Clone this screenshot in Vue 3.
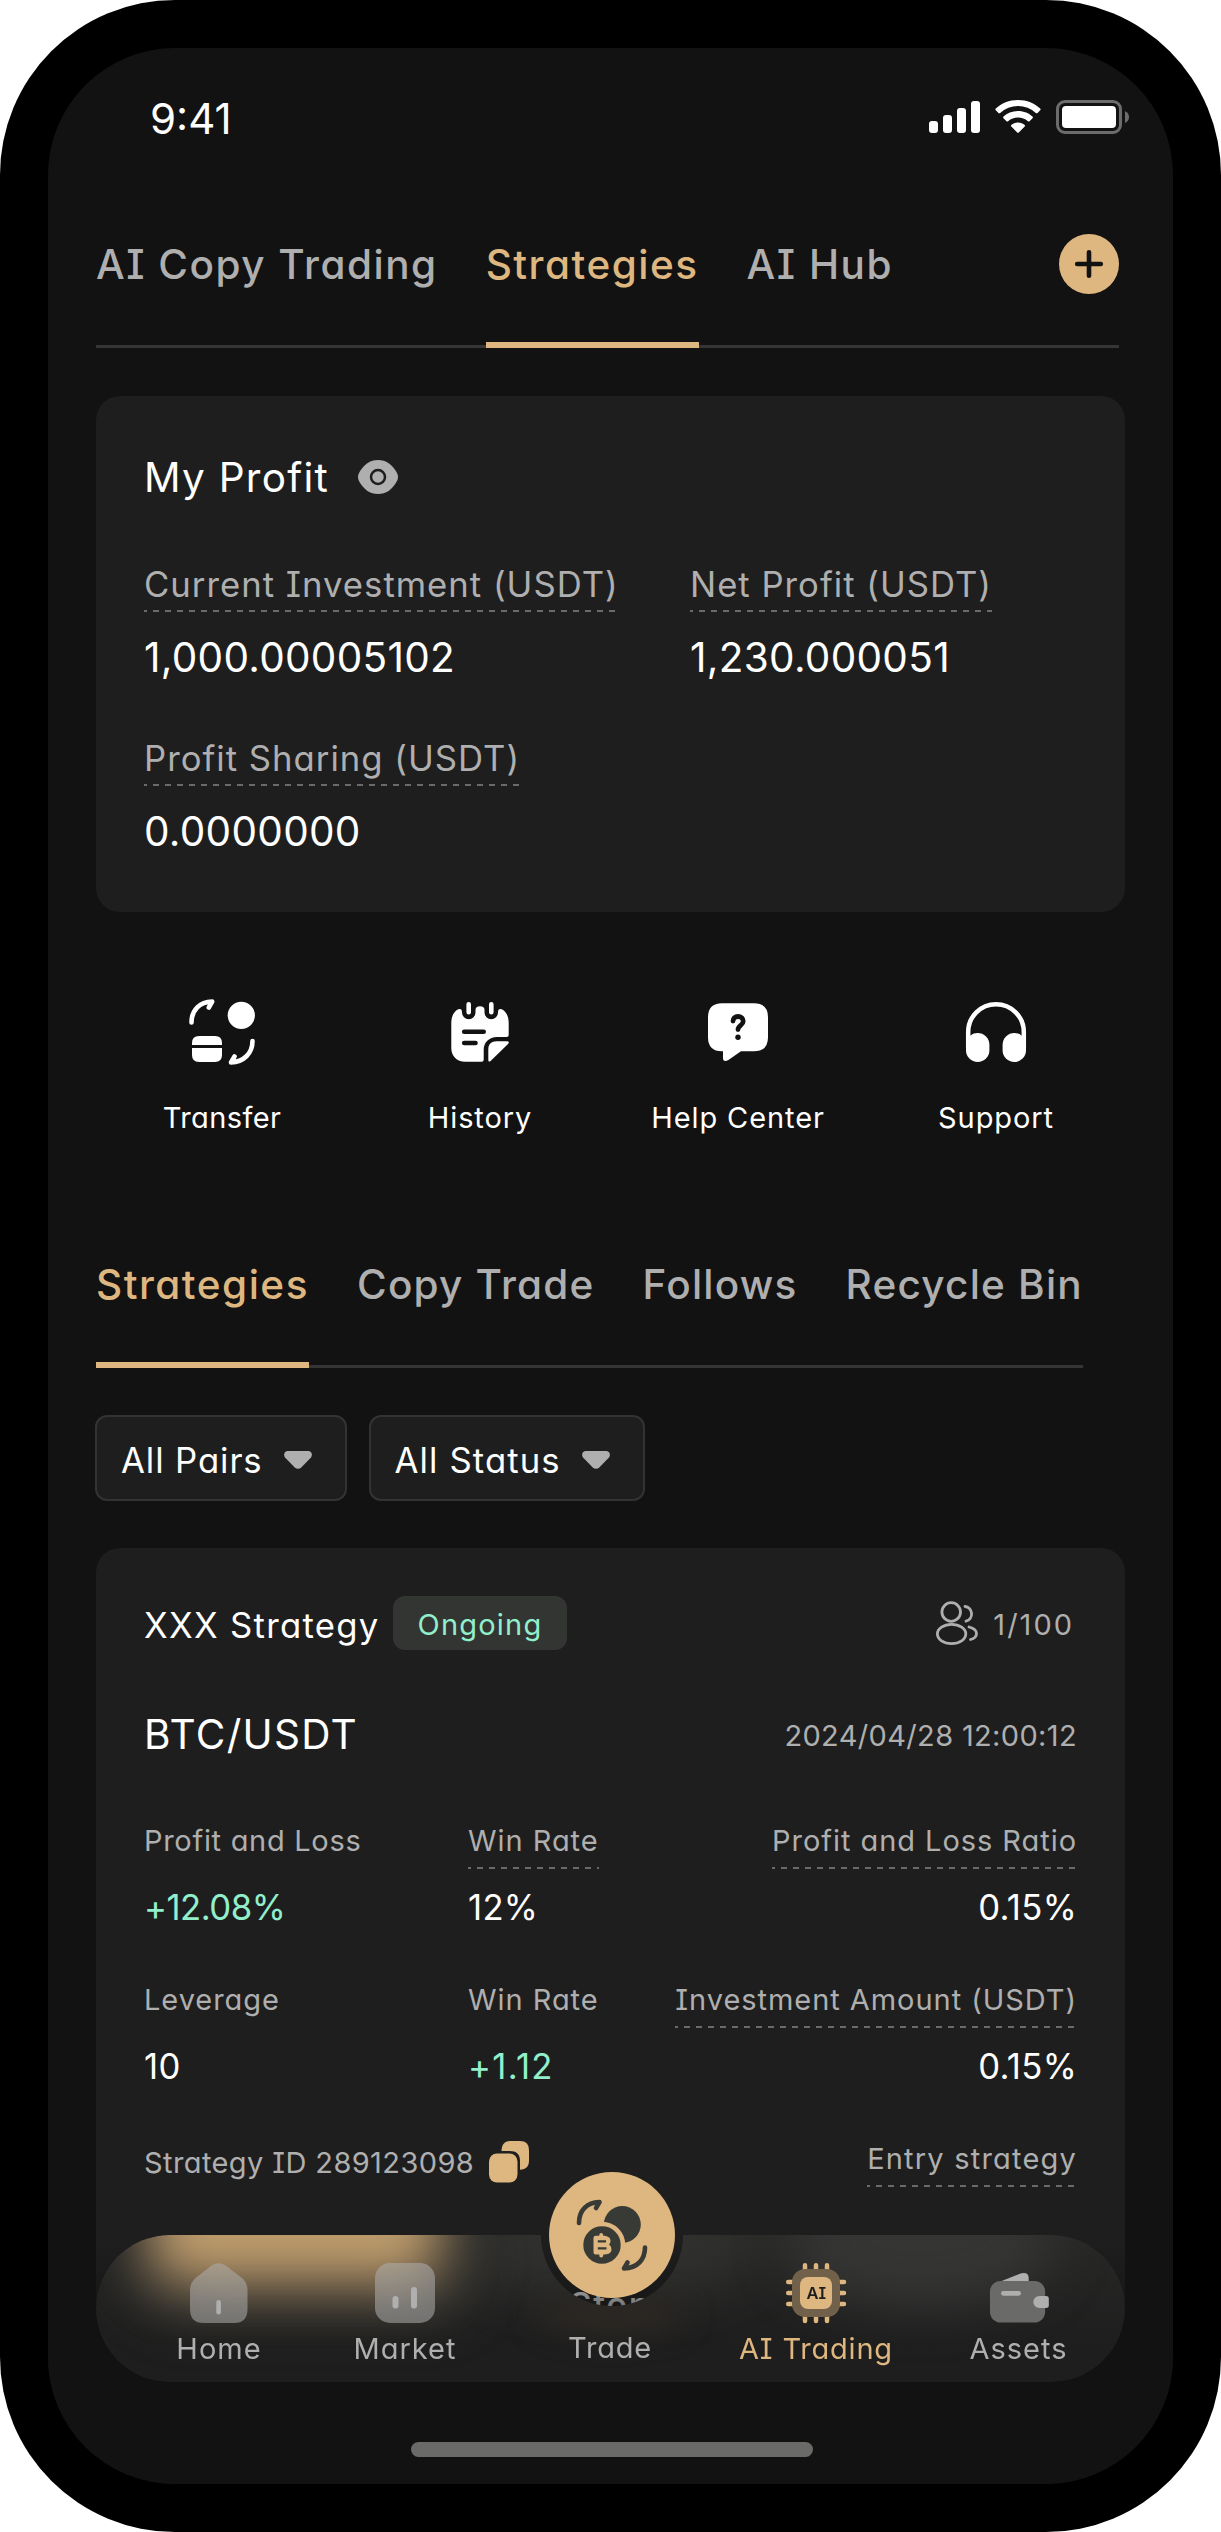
<script setup>
const mainTabs = [
  { label: 'AI Copy Trading' },
  { label: 'Strategies', active: true },
  { label: 'AI Hub' }
]
const listTabs = [
  { label: 'Strategies', active: true },
  { label: 'Copy Trade' },
  { label: 'Follows' },
  { label: 'Recycle Bin' }
]
const totals = [
  { label: 'Current Investment (USDT)', value: '1,000.00005102' },
  { label: 'Net Profit (USDT)', value: '1,230.000051' },
  { label: 'Profit Sharing (USDT)', value: '0.0000000' }
]
const filters = ['All Pairs', 'All Status']
const stats = [
  { label: 'Profit and Loss', value: '+12.08%', gain: true, kind: 'snug' },
  { label: 'Win Rate', value: '12%', dashed: true },
  { label: 'Profit and Loss Ratio', value: '0.15%', dashed: true },
  { label: 'Leverage', value: '10' },
  { label: 'Win Rate', value: '+1.12', gain: true, kind: 'loose' },
  { label: 'Investment Amount (USDT)', value: '0.15%', dashed: true }
]
</script>

<template>
  <div class="device">
    <div class="screen">
      <header class="status">
        <span class="time">9:41</span>
        <svg class="status-icons" width="202" height="36" viewBox="0 0 202 36">
          <g fill="#fff">
            <rect x="1" y="22" width="9" height="12" rx="3" />
            <rect x="15" y="16" width="9" height="18" rx="3" />
            <rect x="29" y="9" width="9" height="25" rx="3" />
            <rect x="43" y="2" width="9" height="32" rx="3" />
            <path d="M90 1C81 1 73.500 4.300 67.800 9.600Q67 10.400 67.800 11.200L70.500 14Q71.300 14.700 72.200 14A26 26 0 0 1 107.800 14Q108.700 14.700 109.500 14L112.200 11.200Q113 10.400 112.200 9.600C106.500 4.300 99 1 90 1Z" />
            <path d="M90 12C84 12 79 14.200 75.500 17.600Q74.700 18.400 75.500 19.200L78.500 22.200Q79.300 22.900 80.100 22.200A15 15 0 0 1 99.900 22.200Q100.700 22.900 101.500 22.200L104.500 19.200Q105.300 18.400 104.500 17.600C101 14.200 96 12 90 12Z" />
            <path d="M90 23.500C87.200 23.500 85 24.500 83.300 26Q82.500 26.800 83.300 27.600L89.200 33.500Q90 34.200 90.800 33.500L96.700 27.600Q97.500 26.800 96.700 26C95 24.500 92.800 23.500 90 23.500Z" />
            <rect x="134" y="7" width="54" height="22" rx="4" />
          </g>
          <rect x="129.500" y="2.500" width="63" height="31" rx="7.500" fill="none" stroke="#6c6c6c" stroke-width="3" />
          <path d="M197 12Q201 14 201 18T197 24Z" fill="#6c6c6c" />
        </svg>
      </header>

      <nav class="tabs main-tabs">
        <span v-for="t in mainTabs" :key="t.label" class="tab" :class="{ active: t.active }">{{ t.label }}</span>
        <svg class="plus" width="60" height="60" viewBox="0 0 60 60">
          <circle cx="30" cy="30" r="30" fill="#deb67f" />
          <path d="M18.200 30H41.800M30 18.200V41.800" stroke="#121212" stroke-width="4.600" stroke-linecap="round" />
        </svg>
      </nav>

      <section class="card profit">
        <h2 class="profit-title">
          My Profit
          <svg width="40" height="34" viewBox="0 0 40 34">
            <path d="M1 13C6 4 12 0 20 0S34 4 39 13Q41 17 39 21C34 30 28 34 20 34S6 30 1 21Q-1 17 1 13Z" fill="#afafaf" />
            <circle cx="20" cy="17" r="7" fill="none" stroke="#1e1e1e" stroke-width="2.500" />
          </svg>
        </h2>
        <div class="profit-grid">
          <div v-for="t in totals" :key="t.label">
            <span class="label dashed">{{ t.label }}</span>
            <p class="total">{{ t.value }}</p>
          </div>
        </div>
      </section>

      <section class="actions">
        <div class="action">
          <svg width="66" height="66" viewBox="0 0 66 66" fill="#fff">
            <path d="M2.500 23.500C2.500 10.500 11 3 23.200 2.500L19.800 8.500M63.500 42C63.500 54.500 54.500 63 42 63.500L45.500 57.500" fill="none" stroke="#fff" stroke-width="4.600" stroke-linecap="round" stroke-linejoin="round" />
            <circle cx="52.300" cy="16.300" r="13.600" />
            <path d="M3 46V44Q3 37 10 37H26Q33 37 33 44V46ZM3 49H33V56Q33 63 26 63H10Q3 63 3 56Z" />
          </svg>
          <span class="near">Transfer</span>
        </div>
        <div class="action">
          <svg width="66" height="66" viewBox="0 0 66 66" fill="#fff">
            <path d="M4.300 24C4.300 16.500 7.500 12 11.200 10.300Q15 9 15 13.500A6.700 6.700 0 0 0 28.500 13.500V11Q28.500 7.300 33 7.300T37.500 11V13.500A6.700 6.700 0 0 0 51 13.500Q51 9 54.800 10.300C58.500 12 61.700 16.500 61.700 24V36Q61.700 38 59.700 38H50C42 38 36.700 43.500 36.700 51V60.700Q36.700 62.700 34.700 62.700H18.300C9.500 62.700 4.300 57 4.300 49Z" />
            <path d="M21.700 5.200V13.200M44.300 5.200V13.200" stroke="#fff" stroke-width="4.600" stroke-linecap="round" />
            <path d="M17.200 32.700H36.700M17.200 44H28.500" stroke="#121212" stroke-width="4.600" stroke-linecap="round" />
            <path d="M41.300 50C41.300 45 44.500 42.200 49.500 42.200H60Q63 42.500 61 45L43.600 62Q41.300 63.600 41.300 61Z" />
          </svg>
          <span>History</span>
        </div>
        <div class="action">
          <svg width="66" height="66" viewBox="0 0 66 66" fill="#fff">
            <path d="M17 4.300H49Q63 4.300 63 18.300V38.300Q63 52.300 49 52.300H36L23 61.300Q18 63.500 18 59V52.300H17Q3 52.300 3 38.300V18.300Q3 4.300 17 4.300Z" />
            <path d="M28 22C28 19.500 30 17.500 33 17.500S38.200 19.500 38.200 22.300C38.200 26.300 33 26.300 33 30.500" fill="none" stroke="#121212" stroke-width="4.800" stroke-linecap="round" />
            <circle cx="33" cy="38.200" r="2.700" fill="#121212" />
          </svg>
          <span>Help Center</span>
        </div>
        <div class="action">
          <svg width="66" height="66" viewBox="0 0 66 66" fill="#fff">
            <path d="M5.200 48V33A27.800 27.800 0 0 1 60.800 33V48" fill="none" stroke="#fff" stroke-width="4.500" />
            <rect x="3" y="34" width="23.400" height="29" rx="11.700" />
            <rect x="39.600" y="34" width="23.400" height="29" rx="11.700" />
          </svg>
          <span>Support</span>
        </div>
      </section>

      <nav class="tabs list-tabs">
        <span v-for="t in listTabs" :key="t.label" class="tab" :class="{ active: t.active }">{{ t.label }}</span>
      </nav>

      <div class="filters">
        <button v-for="f in filters" :key="f" class="filter">
          {{ f }}
          <svg width="28" height="18" viewBox="0 0 28 18"><path d="M3 0H25Q29.500 1.500 27 6.500L17.500 16.200Q14 19.500 10.500 16.200L1 6.500Q-1.500 1.500 3 0Z" fill="#afafaf" /></svg>
        </button>
      </div>

      <section class="card strategy">
        <div class="head">
          <h3>XXX Strategy</h3>
          <span class="badge">Ongoing</span>
          <span class="members">
            <svg width="42" height="44" viewBox="0 0 42 44" fill="none" stroke="#afafaf" stroke-width="2.800" stroke-linecap="round">
              <circle cx="15.200" cy="11" r="9.300" />
              <ellipse cx="15.600" cy="33" rx="14.200" ry="9.600" />
              <path d="M29 5.500A7.500 7.500 0 0 1 30 20.200M33 26C38 27.300 40.500 29.500 40.500 32.500C40.500 35.500 38 37.700 34.500 38.500" />
            </svg>
            <span>1/100</span>
          </span>
        </div>
        <div class="pair">
          <span class="pair-name">BTC/USDT</span>
          <span class="date">2024/04/28 12:00:12</span>
        </div>
        <div class="stats">
          <div v-for="(s, i) in stats" :key="i" class="stat">
            <span class="small" :class="{ dashed: s.dashed }">{{ s.label }}</span>
            <p :class="[s.kind, { gain: s.gain }]">{{ s.value }}</p>
          </div>
        </div>
        <div class="foot">
          <span class="id">Strategy ID 289123098</span>
          <svg width="40" height="42" viewBox="0 0 40 42" fill="#deb67f">
            <path d="M12.500 10C12.800 3.500 15.500 0 21.500 0H31Q40 0 40 9V19.500C40 25.500 37 28.500 31 28.800V20C31 13 27.500 10 20.500 10Z" />
            <rect x="0" y="12.500" width="28.500" height="29" rx="8" />
          </svg>
          <span class="small dashed entry">Entry strategy</span>
        </div>
        <div class="stop">Stop</div>
      </section>

      <div class="fade"></div>

      <nav class="dock">
        <div class="dock-panel">
          <i class="glow mid"></i>
          <i class="glow cool"></i>
          <i class="glow ember"></i>
          <i class="glow halo"></i>
          <i class="glow warm"></i>
          <div class="dock-items">
            <div class="item">
              <svg width="60" height="60" viewBox="0 0 60 60" fill="#afafaf">
                <path d="M22.500 2.500Q29.500-2 36.500 2.500L53 15Q58.500 20 58.500 27V46Q58.500 60 45 60H14.500Q1 60 1 46V27Q1 20 6.500 15Z" opacity=".55" />
                <rect x="27.300" y="37" width="4.600" height="14.500" rx="2.300" />
              </svg>
              <span>Home</span>
            </div>
            <div class="item">
              <svg width="60" height="60" viewBox="0 0 60 60" fill="#afafaf">
                <rect width="60" height="60" rx="15" opacity=".55" />
                <rect x="17.500" y="33" width="6" height="12.500" rx="3" />
                <rect x="36" y="24" width="6" height="21.500" rx="3" />
              </svg>
              <span>Market</span>
            </div>
            <div class="item trade-item"><span>Trade</span></div>
            <div class="item current">
              <svg width="60" height="60" viewBox="0 0 60 60">
                <path d="M19 2.200V58M30 2.200V58M41 2.200V58M2.200 19H58M2.200 30H58M2.200 41H58" stroke="#deb67f" stroke-width="4.500" stroke-linecap="round" />
                <rect x="6" y="6" width="48" height="48" rx="13" fill="#71614a" />
                <rect x="14" y="14" width="32" height="32" rx="8" fill="#deb67f" />
                <text x="30.300" y="36" text-anchor="middle" font-size="16.500" font-weight="600" fill="#1e1e1e">AI</text>
              </svg>
              <span>AI Trading</span>
            </div>
            <div class="item">
              <svg width="62" height="62" viewBox="0 0 62 62" fill="#afafaf">
                <path d="M13 18.500L33.500 10.500Q41 9 41 15.500V18.500Z" />
                <rect x="1" y="18.500" width="57" height="43" rx="11" fill="#6a6a69" />
                <rect x="12.500" y="29" width="20.500" height="4.800" rx="2.200" />
                <path d="M52 34H59Q61.800 34 61.800 36.800V43.700Q61.800 46.500 59 46.500H52A6.200 6.200 0 0 1 52 34Z" />
              </svg>
              <span>Assets</span>
            </div>
          </div>
        </div>
        <svg class="trade" width="126" height="126" viewBox="0 0 126 126">
          <circle cx="63" cy="63" r="63" fill="#deb67f" />
          <path d="M30 51C30 38 38 30.500 50.500 30L47 36M96 75.500C96 88 88 96 75 96.500L78.500 90.500" fill="none" stroke="#383a36" stroke-width="4.600" stroke-linecap="round" stroke-linejoin="round" />
          <circle cx="73.300" cy="52.500" r="18.500" fill="#383a36" />
          <circle cx="53" cy="73" r="21" fill="#383a36" stroke="#deb67f" stroke-width="4.600" />
          <path d="M44.500 66Q44.500 63.800 46.700 63.800H50.300V63Q50.300 61 52.200 61T54.200 63V63.800C59.500 63.800 61.500 66.200 61.500 69Q61.500 71.300 60 72.600Q62.500 74.200 62.500 77.300C62.500 80.500 60 82.500 55.500 82.500H54.200V83.500Q54.200 85.500 52.200 85.500T50.300 83.500V82.500H46.700Q44.500 82.500 44.500 80.300Z" fill="#deb67f" />
          <path d="M48.800 69.300H57M48.800 76.300H57.500" stroke="#383a36" stroke-width="2.300" />
        </svg>
      </nav>
      <div class="home-bar"></div>
    </div>
  </div>
</template>

<style>
body { margin: 0; background: #fff; }
</style>

<style scoped>
.device {
  box-sizing: border-box;
  width: 1221px;
  height: 2532px;
  padding: 48px;
  border-radius: 175px;
  background: #000;
  color: #fff;
  font-family: Inter, "Noto Sans", sans-serif;
  font-feature-settings: "cv08", "cv11";
}
.screen {
  position: relative;
  box-sizing: border-box;
  height: 2436px;
  padding: 0 48px;
  border-radius: 127px;
  background: #121212;
  overflow: hidden;
}
h2, h3, p { margin: 0; font-weight: 400; }

.status { display: flex; align-items: center; justify-content: space-between; height: 138px; }
.time { margin-left: 54px; padding-top: 3px; font-size: 42px; }
.status-icons { margin-right: -5px; }

.tabs { display: flex; gap: 48px; height: 162px; box-shadow: inset 0 -3px #353535; }
.tab {
  height: 108px;
  padding-top: 48px;
  line-height: 61px;
  font-size: 40.5px;
  font-weight: 500;
  letter-spacing: 1.5px;
  color: #afafaf;
  white-space: nowrap;
}
.active { color: #deb67f; border-bottom: 6px solid #deb67f; }
.main-tabs { width: 1023px; }
.plus { margin: 48px 0 0 auto; }
.list-tabs { width: 987px; margin-top: 69px; }
.list-tabs .tab:not(.active) { letter-spacing: 1.22px; }

.card { box-sizing: border-box; width: 1029px; padding: 0 48px; border-radius: 24px; background: #1e1e1e; }
.dashed { position: relative; }
.dashed::after {
  content: "";
  position: absolute;
  left: 0;
  right: 0;
  bottom: 0;
  height: 2px;
  background: repeating-linear-gradient(90deg, #6a6a6a 0 3px, transparent 3px 9px, #6a6a6a 9px 12px);
}

.profit { height: 516px; margin-top: 48px; padding-top: 54px; }
.profit-title {
  display: flex;
  align-items: center;
  gap: 29px;
  height: 54px;
  margin-bottom: 57px;
  font-size: 40.5px;
  letter-spacing: 1.25px;
}
.profit-grid { display: grid; grid-template-columns: 546px 1fr; row-gap: 50px; }
.label {
  display: inline-block;
  height: 47px;
  padding-bottom: 4px;
  line-height: 47px;
  font-size: 34.7px;
  letter-spacing: 1px;
  color: #afafaf;
  vertical-align: top;
}
.total { margin-top: 19px; line-height: 54px; font-size: 40.5px; letter-spacing: .3px; }

.actions { display: grid; grid-template-columns: repeat(4, 258px); margin: 87px 0 0 -3px; }
.action { display: flex; flex-direction: column; align-items: center; gap: 33px; line-height: 39px; font-size: 29px; letter-spacing: .9px; }
.near { letter-spacing: .4px; }

.filters { display: flex; gap: 22px; margin: 47px 0 0 -1px; }
.filter {
  display: flex;
  align-items: center;
  gap: 21px;
  box-sizing: border-box;
  height: 86px;
  padding: 4px 33px 0 24px;
  border: 2px solid #333;
  border-radius: 12px;
  background: #1e1e1e;
  color: #fff;
  font: 400 34.7px Inter, "Noto Sans", sans-serif;
  font-feature-settings: "cv08", "cv11";
  letter-spacing: .9px;
}
.filter:last-child { letter-spacing: 1.1px; }

.strategy { height: 790px; margin-top: 47px; padding-top: 48px; }
.head { display: flex; align-items: center; height: 54px; }
.head h3 { width: 249px; padding-top: 3px; font-size: 34.7px; letter-spacing: 1.3px; }
.badge {
  box-sizing: border-box;
  width: 174px;
  height: 54px;
  padding-top: 2px;
  border-radius: 12px;
  background: #333533;
  color: #92efcc;
  text-align: center;
  line-height: 53px;
  font-size: 29px;
  letter-spacing: 1.2px;
}
.members { display: flex; align-items: center; gap: 15px; margin: 0 3px 0 auto; font-size: 29px; letter-spacing: 2px; color: #afafaf; }
.members span { padding-top: 2px; }
.pair { display: flex; align-items: center; justify-content: space-between; height: 54px; margin-top: 57px; margin-bottom: 60px; }
.pair-name { font-size: 40.5px; letter-spacing: 1.3px; }
.date { padding-top: 3px; font-size: 29px; letter-spacing: .35px; color: #afafaf; }
.stats { display: grid; grid-template-columns: 324px 200px 1fr; row-gap: 49px; }
.stat:nth-child(3n) { text-align: right; }
.stat:first-child .small { letter-spacing: .7px; }
.small {
  display: inline-block;
  height: 39px;
  padding-bottom: 9px;
  line-height: 39px;
  font-size: 29px;
  letter-spacing: .95px;
  color: #afafaf;
  vertical-align: top;
  white-space: nowrap;
}
.stat p { margin-top: 15px; line-height: 47px; font-size: 34.7px; letter-spacing: .3px; }
.stat .gain { color: #92efcc; }
.stat .snug { letter-spacing: -.5px; }
.stat .loose { letter-spacing: 1.3px; }
.foot { display: flex; align-items: flex-start; height: 48px; margin-top: 49px; }
.id { margin-top: 4px; line-height: 39px; font-size: 29px; letter-spacing: .4px; color: #afafaf; }
.foot svg { margin: 2px 0 0 15px; }
.entry { margin-left: auto; letter-spacing: 1.2px; }
.stop { margin-top: 93px; text-align: center; line-height: 48px; font-size: 34.7px; letter-spacing: 1.5px; color: #f4f4f4; font-weight: 500; }

.fade {
  position: absolute;
  left: 0;
  right: 0;
  top: 2192px;
  bottom: 0;
  background: linear-gradient(rgba(18, 18, 18, 0), #121212 120px);
}

.dock { position: absolute; left: 48px; top: 2187px; width: 1029px; height: 147px; }
.dock-panel {
  position: relative;
  height: 147px;
  border-radius: 74px;
  background: linear-gradient(#282827, #1e1e1e 75%);
  overflow: hidden;
  -webkit-mask: radial-gradient(circle at 516px 0, transparent 70.5px, #000 71.5px);
  mask: radial-gradient(circle at 516px 0, transparent 70.5px, #000 71.5px);
}
.glow { position: absolute; display: block; }
.warm { left: 54px; top: -90px; width: 290px; height: 138px; border-radius: 30px; background: #bf9d6d; filter: blur(27px); }
.halo { left: 30px; top: -30px; width: 360px; height: 120px; border-radius: 60px; background: rgba(54, 54, 50, .6); filter: blur(20px); }
.mid { left: 370px; top: -50px; width: 290px; height: 110px; border-radius: 50%; background: #30302e; filter: blur(25px); }
.cool { left: 690px; top: -60px; width: 270px; height: 130px; border-radius: 50%; background: #353634; filter: blur(25px); }
.ember { left: 440px; top: 60px; width: 150px; height: 40px; border-radius: 50%; background: #2b2723; filter: blur(14px); }
.dock-items {
  position: relative;
  display: grid;
  grid-template-columns: 182px 190px 220px 192px 213px;
  padding: 28px 0 0 32px;
}
.item { display: flex; flex-direction: column; align-items: center; gap: 6px; line-height: 39px; font-size: 29px; letter-spacing: 1px; color: #afafaf; }
.item svg { display: block; height: 60px; overflow: visible; }
.trade-item { padding-top: 65px; letter-spacing: .8px; }
.current { color: #deb67f; letter-spacing: .8px; }
.current text { letter-spacing: 0; }
.trade { position: absolute; left: 453px; top: -63px; }
.home-bar { position: absolute; left: 363px; top: 2394px; width: 402px; height: 15px; border-radius: 8px; background: #6a6a69; }
</style>
